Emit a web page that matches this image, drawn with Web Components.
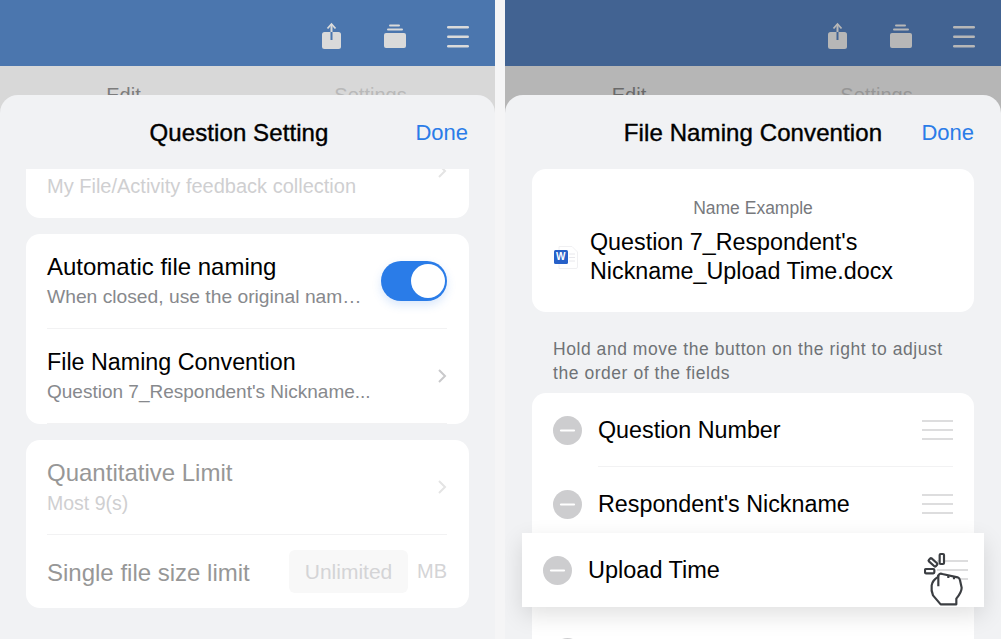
<!DOCTYPE html>
<html>
<head>
<meta charset="utf-8">
<title>File naming settings</title>
<style>
  html, body { margin: 0; padding: 0; }
  body {
    width: 1001px;
    height: 639px;
    overflow: hidden;
    background: #f5f5f6;
    font-family: 'Liberation Sans', Arial, sans-serif;
    display: flex;
    justify-content: space-between;
  }
</style>
</head>
<body>
<phone-panel style="--bar:#4b76ae;--under:#d8d8d8;--ico:#dadada;--edit:#7d7d7d;--settings:#b9b9b9">
  <sheet-head title-shift="16">Question Setting</sheet-head>
  <scroll-body>
    <list-card style="margin-top:-45px">
      <card-row sub="My File/Activity feedback collection" sub-color="#cfcfd1" chevron="#e4e4e4" style="--sub-y:30px;--sub-size:20px"></card-row>
    </list-card>
    <list-card>
      <card-row title="Automatic file naming" sub="When closed, use the original nam…" divider style="--sub-size:19.250px">
        <toggle-switch slot="end"></toggle-switch>
      </card-row>
      <card-row title="File Naming Convention" sub="Question 7_Respondent's Nickname..." chevron="#c9c9cb" divider style="--title-size:23.300px;--sub-size:19px"></card-row>
    </list-card>
    <list-card>
      <card-row title="Quantitative Limit" title-color="#979797" sub="Most 9(s)" sub-color="#cfcfd1" chevron="#e4e4e4" divider></card-row>
      <card-row title="Single file size limit" title-color="#979797" style="--row-h:73px">
        <limit-field slot="end"></limit-field>
      </card-row>
    </list-card>
  </scroll-body>
</phone-panel>

<phone-panel style="--panel-w:496px;--bar:#426392;--under:#b6b6b6;--ico:#b7b7b7;--edit:#6a6a6a;--settings:#969696;--pad-l:27px;--pad-r:27px;--tab-first:248px">
  <sheet-head>File Naming Convention</sheet-head>
  <scroll-body>
    <example-card></example-card>
    <hint-text>Hold and move the button on the right to adjust the order of the fields</hint-text>
    <field-list>
      <field-row divider>Question Number</field-row>
      <field-row>Respondent's Nickname</field-row>
      <field-row empty></field-row>
      <field-row only-icon></field-row>
    </field-list>
  </scroll-body>
  <drag-row>Upload Time</drag-row>
</phone-panel>

<script>
// top bar + tabs behind, bottom sheet on top
class PhonePanel extends HTMLElement {
  constructor() {
    super();
    this.attachShadow({ mode: 'open' });
    this.shadowRoot.innerHTML = `
      <style>
        :host { display: block; position: relative; flex: none; width: var(--panel-w, 495px); height: 639px; background: var(--under); overflow: hidden; }
        .bar { height: 66px; background: var(--bar); display: flex; justify-content: flex-end; align-items: flex-start; }
        .bar svg { display: block; }
        .tabs { display: flex; padding-top: 17px; font-size: 20px; line-height: 24px; }
        .tabs span { width: 247px; text-align: center; color: var(--edit); }
        .tabs span:first-child { width: var(--tab-first, 247px); }
        .tabs span + span { color: var(--settings); }
        .sheet {
          position: absolute; left: 0; right: 0; top: 95px; bottom: 0;
          background: #f1f2f4; border-radius: 18px 18px 0 0;
          display: flex; flex-direction: column;
        }
      </style>
      <div class="bar">
        <svg width="180" height="66" viewBox="0 0 180 66">
          <g transform="translate(-315 0)">
            <rect x="322" y="32" width="19" height="17" rx="2.5" fill="var(--ico)"/>
            <path d="M331.5 24v8" stroke="var(--ico)" stroke-width="2" fill="none"/>
            <path d="M327.5 28.5l4-4.5 4 4.5" stroke="var(--ico)" stroke-width="1.8" fill="none"/>
            <path d="M331.5 32v8" stroke="var(--bar)" stroke-width="2" fill="none"/>
            <rect x="384" y="33" width="22" height="15" rx="2" fill="var(--ico)"/>
            <rect x="387" y="28.6" width="16" height="2" rx="1" fill="var(--ico)"/>
            <rect x="389" y="24.4" width="11" height="2" rx="1" fill="var(--ico)"/>
            <rect x="447" y="26" width="22" height="2.4" rx="1.2" fill="var(--ico)"/>
            <rect x="447" y="35.6" width="22" height="2.4" rx="1.2" fill="var(--ico)"/>
            <rect x="447" y="45" width="22" height="2.4" rx="1.2" fill="var(--ico)"/>
          </g>
        </svg>
      </div>
      <div class="tabs"><span>Edit</span><span>Settings</span></div>
      <div class="sheet"><slot></slot></div>
      <slot name="over"></slot>
    `;
  }
}

class SheetHead extends HTMLElement {
  constructor() {
    super();
    this.attachShadow({ mode: 'open' });
    const shift = this.getAttribute('title-shift') || 0;
    this.shadowRoot.innerHTML = `
      <style>
        :host { display: grid; grid-template-columns: 1fr auto 1fr; align-items: center; box-sizing: border-box; height: 74px; flex: none; padding: 2px 27px 0 var(--pad-l, 26px); }
        .t { grid-column: 2; font-size: 24px; letter-spacing: .1px; -webkit-text-stroke: .4px #000; color: #000; padding-right: ${shift}px; white-space: nowrap; }
        .d { grid-column: 3; justify-self: end; font-size: 22px; color: #2a7ce8; }
      </style>
      <div class="t"><slot></slot></div>
      <div class="d">Done</div>
    `;
  }
}

class ScrollBody extends HTMLElement {
  constructor() {
    super();
    this.attachShadow({ mode: 'open' });
    this.shadowRoot.innerHTML = `
      <style>
        :host { display: flex; flex-direction: column; gap: 16px; flex: 1; min-height: 0; overflow: hidden; padding: 0 var(--pad-r, 26px) 0 var(--pad-l, 26px); }
        ::slotted(*) { flex: none; }
      </style>
      <slot></slot>
    `;
  }
}

class ListCard extends HTMLElement {
  constructor() {
    super();
    this.attachShadow({ mode: 'open' });
    this.shadowRoot.innerHTML = `
      <style>
        :host { display: block; background: #fff; border-radius: 14px; padding: 0 22px 0 21px; }
      </style>
      <slot></slot>
    `;
  }
}

class CardRow extends HTMLElement {
  constructor() {
    super();
    this.attachShadow({ mode: 'open' });
    const title = this.getAttribute('title');
    const sub = this.getAttribute('sub');
    const chevron = this.getAttribute('chevron');
    const titleColor = this.getAttribute('title-color') || '#000';
    const subColor = this.getAttribute('sub-color') || '#87898d';
    this.shadowRoot.innerHTML = `
      <style>
        :host { display: flex; align-items: center; height: var(--row-h, 94px); white-space: nowrap; }
        :host([divider]) { border-bottom: 1px solid #f2f2f3; }
        .text { flex: 1; min-width: 0; padding-top: var(--sub-y, 2px); }
        .title { font-size: var(--title-size, 24px); line-height: 30px; color: ${titleColor}; }
        .sub { font-size: var(--sub-size, 19.500px); line-height: 30px; color: ${subColor}; }
        svg { display: block; flex: none; }
      </style>
      <div class="text">
        ${title ? `<div class="title">${title}</div>` : ''}
        ${sub ? `<div class="sub">${sub}</div>` : ''}
      </div>
      ${chevron ? `<svg width="10" height="16" viewBox="0 0 10 16"><path d="M2 2l6 6-6 6" fill="none" stroke="${chevron}" stroke-width="2"/></svg>` : ''}
      <slot name="end"></slot>
    `;
  }
}

class ToggleSwitch extends HTMLElement {
  constructor() {
    super();
    this.attachShadow({ mode: 'open' });
    this.shadowRoot.innerHTML = `
      <style>
        :host { display: flex; justify-content: flex-end; align-items: center; width: 66px; height: 40px; box-sizing: border-box; padding: 0 2.500px; border-radius: 20px; background: #2a7ce8; box-shadow: 0 4px 10px rgba(42,124,232,.18); }
        i { display: block; width: 34px; height: 34px; border-radius: 50%; background: #fff; }
      </style>
      <i></i>
    `;
  }
}

class LimitField extends HTMLElement {
  constructor() {
    super();
    this.attachShadow({ mode: 'open' });
    this.shadowRoot.innerHTML = `
      <style>
        :host { display: flex; align-items: center; gap: 9px; color: #d4d4d6; }
        .box { width: 119px; height: 43px; line-height: 43px; text-align: center; background: #f8f8f8; border-radius: 6px; font-size: 21px; }
        .u { font-size: 20px; }
      </style>
      <div class="box">Unlimited</div>
      <div class="u">MB</div>
    `;
  }
}

class ExampleCard extends HTMLElement {
  constructor() {
    super();
    this.attachShadow({ mode: 'open' });
    this.shadowRoot.innerHTML = `
      <style>
        :host { display: block; height: 143px; box-sizing: border-box; background: #fff; border-radius: 14px; padding: 29px 22px 0; }
        .cap { text-align: center; font-size: 17.500px; line-height: 20px; color: #77797d; }
        .line { display: flex; align-items: center; gap: 12px; margin-top: 10px; }
        .name { font-size: 23.300px; line-height: 29px; color: #000; }
        .doc { position: relative; flex: none; width: 24px; height: 23px; }
        .doc svg { display: block; }
        .doc b { position: absolute; left: 0; top: 4.5px; width: 13.5px; height: 13.5px; background: #2660c8; border-radius: 1.5px; color: #fff; font-size: 10px; line-height: 13.5px; text-align: center; }
      </style>
      <div class="cap">Name Example</div>
      <div class="line">
        <div class="doc">
          <svg width="24" height="23" viewBox="0 0 24 23"><path d="M5 .5h13l5.500 5.500v15a1.500 1.500 0 0 1-1.500 1.500h-17z" fill="#fff" stroke="#f0f0f2"/><path d="M15 8h6M15 11.500h6M15 15h6" stroke="#e8e8ec"/></svg>
          <b>W</b>
        </div>
        <div class="name">Question 7_Respondent's<br>Nickname_Upload Time.docx</div>
      </div>
    `;
  }
}

class HintText extends HTMLElement {
  constructor() {
    super();
    this.attachShadow({ mode: 'open' });
    this.shadowRoot.innerHTML = `
      <style>
        :host { display: block; font-size: 17.500px; letter-spacing: .55px; font-feature-settings: "liga" 1; line-height: 24px; color: #6f7276; padding: 9px 21px 0; margin-bottom: -8px; }
      </style>
      <slot></slot>
    `;
  }
}

class FieldList extends HTMLElement {
  constructor() {
    super();
    this.attachShadow({ mode: 'open' });
    this.shadowRoot.innerHTML = `
      <style>
        :host { display: block; background: #fff; border-radius: 14px 14px 0 0; }
      </style>
      <slot></slot>
    `;
  }
}

const handleSvg = `<svg width="31" height="20" viewBox="0 0 31 20"><path d="M0 1h31M0 10h31M0 19h31" stroke="#d2d2d4" stroke-width="1.6"/></svg>`;
const minusSvg = `<svg width="29" height="29" viewBox="0 0 29 29"><circle cx="14.500" cy="14.500" r="14.500" fill="#cdcdcf"/><path d="M8 14.500h13" stroke="#fff" stroke-width="2.200" stroke-linecap="round"/></svg>`;

class FieldRow extends HTMLElement {
  constructor() {
    super();
    this.attachShadow({ mode: 'open' });
    const empty = this.hasAttribute('empty');
    this.shadowRoot.innerHTML = `
      <style>
        :host { display: flex; align-items: center; height: 74px; padding: 0 21px; position: relative; font-size: 23.300px; color: #000; }
        .m { flex: none; width: 29px; height: 29px; margin-right: 16px; }
        .m svg, .h svg { display: block; }
        .l { flex: 1; padding-top: 1px; }
        :host([divider]) .rule { position: absolute; left: 66px; right: 21px; bottom: 0; height: 1px; background: #f2f2f3; }
      </style>
      ${empty ? '' : `<div class="m">${minusSvg}</div><div class="l"><slot></slot></div>`}
      ${this.textContent.trim() ? `<div class="h">${handleSvg}</div>` : ''}
      <div class="rule"></div>
    `;
  }
}

class DragRow extends HTMLElement {
  constructor() {
    super();
    this.attachShadow({ mode: 'open' });
    this.shadowRoot.innerHTML = `
      <style>
        :host {
          position: absolute; left: 17px; top: 533px; width: 462px; height: 74px; box-sizing: border-box;
          display: flex; align-items: center; padding: 0 16px 0 21px;
          background: #fff; box-shadow: 0 8px 22px rgba(0,0,0,.12); font-size: 23.500px; color: #000;
        }
        .m { flex: none; width: 29px; height: 29px; margin-right: 16px; }
        .m svg, .h svg { display: block; }
        .l { flex: 1; padding-top: 1px; }
        .hand { position: absolute; left: 402px; top: 19px; display: block; }
      </style>
      <div class="m">${minusSvg}</div>
      <div class="l"><slot></slot></div>
      <div class="h">${handleSvg}</div>
      <svg class="hand" width="40" height="55" viewBox="75 65 120 165">
        <g fill="#fff" stroke="#3b3e42" stroke-width="6.500" stroke-linejoin="round">
          <rect x="78" y="116" width="28" height="13" rx="3"/>
          <rect x="88" y="90" width="28" height="12" rx="3" transform="rotate(42 102 96)"/>
          <rect x="122" y="71" width="13" height="30" rx="3"/>
          <path d="M117 140C117 132 124 128 130 131L176 141Q182 143 183 150L188 172Q188 185 172 205L172 222L125 222L102 195Q96 180 98 165Q100 150 117 140Z"/>
          <path d="M118 134L118 168M148 135L148 143M165 139L165 147" fill="none"/>
        </g>
      </svg>
    `;
    this.slot = 'over';
  }
}

customElements.define('phone-panel', PhonePanel);
customElements.define('sheet-head', SheetHead);
customElements.define('scroll-body', ScrollBody);
customElements.define('list-card', ListCard);
customElements.define('card-row', CardRow);
customElements.define('toggle-switch', ToggleSwitch);
customElements.define('limit-field', LimitField);
customElements.define('example-card', ExampleCard);
customElements.define('hint-text', HintText);
customElements.define('field-list', FieldList);
customElements.define('field-row', FieldRow);
customElements.define('drag-row', DragRow);
</script>
</body>
</html>
